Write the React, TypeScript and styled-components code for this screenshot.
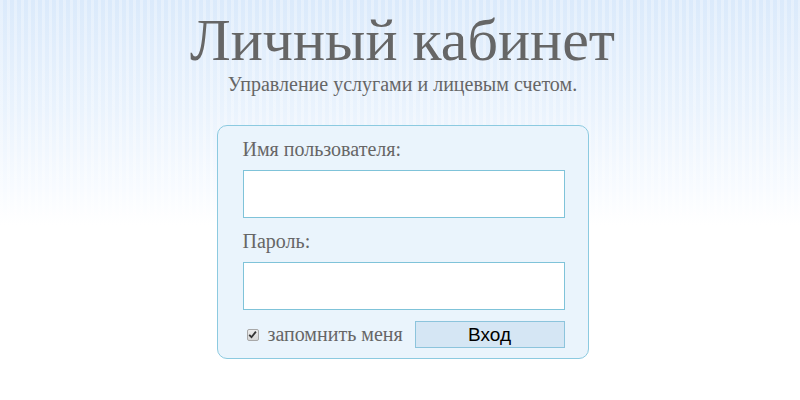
import { createGlobalStyle, styled } from 'styled-components';

const GlobalStyle = createGlobalStyle`
  html, body {
    margin: 0;
    padding: 0;
  }
  body {
    min-height: 400px;
    font-family: "Liberation Serif", "Times New Roman", serif;
    background-color: #ffffff;
    background-image:
      repeating-linear-gradient(90deg, rgba(255,255,255,0.3) 0 3px, rgba(255,255,255,0) 3px 7px),
      linear-gradient(180deg, #dbeafb 0px, #eaf3fd 110px, #f8fbff 190px, #ffffff 225px);
    background-repeat: repeat-x;
    background-size: 100% 225px, 100% 225px;
  }
`;

const App = () => {
  return (
    <>
      <GlobalStyle />
      <Page>
        <Title>Личный кабинет</Title>
        <Subtitle>Управление услугами и лицевым счетом.</Subtitle>
        <LoginBox>
          <Label>Имя пользователя:</Label>
          <Field type="text" />
          <Label>Пароль:</Label>
          <Field type="password" />
          <BottomRow>
            <Remember>
              <HiddenCheck type="checkbox" defaultChecked />
              <CheckBox>
                <svg width="9" height="9" viewBox="0 0 9 9">
                  <path d="M1.2 4.8 L3.5 7.2 L7.9 1.6" fill="none" stroke="#333" strokeWidth="1.8" />
                </svg>
              </CheckBox>
              запомнить меня
            </Remember>
            <SubmitButton type="button">Вход</SubmitButton>
          </BottomRow>
        </LoginBox>
      </Page>
    </>
  );
};

export default App;

const Page = styled.main`
  display: flex;
  flex-direction: column;
  align-items: center;
  padding-top: 8px;
  padding-left: 5px;
`;

const Title = styled.h1`
  margin: 0;
  font-size: 60px;
  font-weight: normal;
  line-height: 64px;
  color: #666666;
`;

const Subtitle = styled.p`
  margin: 0;
  font-size: 20px;
  line-height: 24px;
  color: #666666;
`;

const LoginBox = styled.form`
  margin-top: 29px;
  width: 372px;
  box-sizing: border-box;
  padding: 12px 25px 10px 25px;
  background: #eaf4fc;
  border: 1px solid #8ccae0;
  border-radius: 10px;
  display: flex;
  flex-direction: column;
`;

const Label = styled.label`
  font-size: 20px;
  line-height: 22px;
  color: #666666;
  margin-bottom: 10px;
  & + input {
    margin-bottom: 12px;
  }
`;

const Field = styled.input`
  box-sizing: border-box;
  width: 322px;
  height: 48px;
  border: 1px solid #7fc3d9;
  background: #ffffff;
  outline: none;
`;

const BottomRow = styled.div`
  display: flex;
  align-items: center;
  justify-content: space-between;
  width: 322px;
  margin-top: -1px;
`;

const Remember = styled.label`
  display: flex;
  align-items: center;
  gap: 9px;
  font-size: 20px;
  color: #666666;
  padding-left: 4px;
`;

const HiddenCheck = styled.input`
  display: none;
`;

const CheckBox = styled.span`
  box-sizing: border-box;
  width: 12px;
  height: 12px;
  border: 1px solid #a8a8a8;
  border-radius: 2px;
  background: linear-gradient(180deg, #ececec, #d6d6d6);
  display: flex;
  align-items: center;
  justify-content: center;
`;

const SubmitButton = styled.button`
  box-sizing: border-box;
  width: 150px;
  height: 27px;
  border: 1px solid #8cc4dc;
  background: #d5e6f4;
  font-family: "Liberation Sans", Arial, sans-serif;
  font-size: 19px;
  color: #000000;
  padding: 0;
  cursor: pointer;
`;
